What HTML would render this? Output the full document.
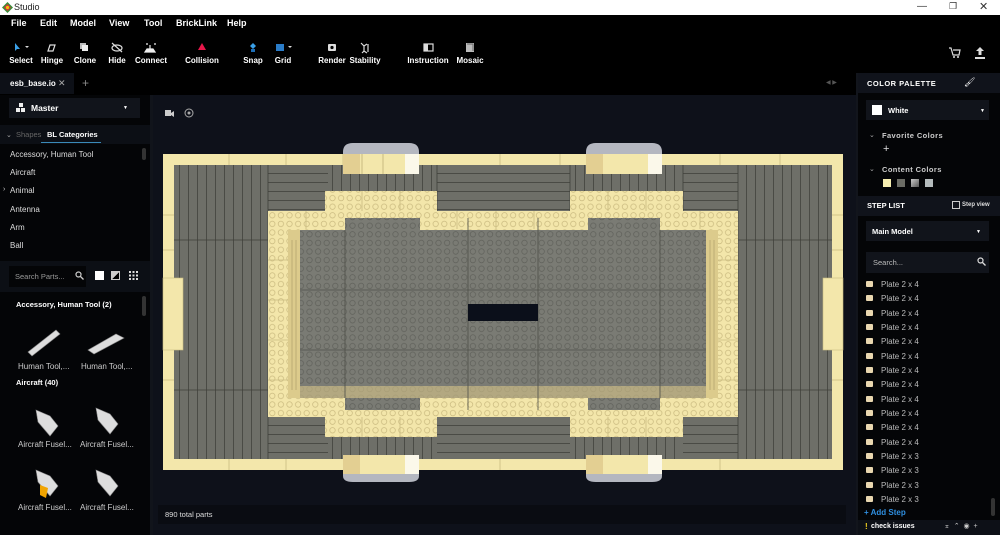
<!DOCTYPE html>
<html><head><meta charset="utf-8"><style>
*{margin:0;padding:0;box-sizing:border-box}
body{width:1000px;height:535px;overflow:hidden;background:#000;font-family:"Liberation Sans",sans-serif;color:#fff;position:relative;font-size:8px}
.a{position:absolute}
.b{font-weight:bold}
.menu span{position:absolute;top:18px;font-size:9px;font-weight:bold}
.tb span{position:absolute;top:56px;font-size:8px;font-weight:bold;transform:translateX(-50%);white-space:nowrap}
.li{position:absolute;left:10px;font-size:8px;color:#ddd}
.pl{position:absolute;left:867px;font-size:8px;color:#bbb}
.pl i{position:absolute;left:-1px;top:1px;width:7px;height:6px;background:#e9d7b0;border-radius:1px}
.pl b{position:absolute;left:14px;font-weight:normal;white-space:nowrap}
</style></head><body>
<div class="a" style="left:0;top:0;width:1000px;height:15px;background:#fff"></div>
<svg class="a" style="left:2px;top:2px" width="11" height="11" viewBox="0 0 11 11"><path d="M5.5 0L11 5.5 5.5 11 0 5.5z" fill="#3a8d3a"/><path d="M5.5 2L9 5.5 5.5 9 2 5.5z" fill="#d33"/><circle cx="5.5" cy="5.5" r="1.6" fill="#f4c20d"/></svg>
<div class="a" style="left:14px;top:2px;color:#222;font-size:9px">Studio</div>
<div class="a" style="left:917px;top:1px;color:#333;font-size:10px">—</div>
<div class="a" style="left:949px;top:1px;color:#333;font-size:9px">❐</div>
<div class="a" style="left:979px;top:0px;color:#333;font-size:11px">✕</div>
<div class="menu">
<span style="left:11px">File</span><span style="left:40px">Edit</span><span style="left:70px">Model</span><span style="left:109px">View</span><span style="left:144px">Tool</span><span style="left:176px">BrickLink</span><span style="left:227px">Help</span>
</div>
<div class="tb">
<span style="left:21px">Select</span><span style="left:52px">Hinge</span><span style="left:85px">Clone</span><span style="left:117px">Hide</span><span style="left:151px">Connect</span><span style="left:202px">Collision</span><span style="left:253px">Snap</span><span style="left:283px">Grid</span><span style="left:332px">Render</span><span style="left:365px">Stability</span><span style="left:428px">Instruction</span><span style="left:470px">Mosaic</span>
</div>
<svg class="a" style="left:0;top:40px" width="500" height="14" viewBox="0 40 500 14">
<path d="M15 43l0 8 2-2 3 0z" fill="#3aa0e8"/><path d="M25 46h4l-2 2z" fill="#ddd"/>
<path d="M48 51l2-6h5l-2 6z" fill="none" stroke="#ddd" stroke-width="1.2"/>
<rect x="80" y="43" width="6" height="6" fill="#bbb"/><rect x="82" y="45" width="6" height="6" fill="#eee"/>
<ellipse cx="117" cy="48" rx="5" ry="3" fill="none" stroke="#ddd" stroke-width="1.2"/><path d="M112 43l10 9" stroke="#ddd" stroke-width="1.2"/>
<path d="M146 44h2M154 44h2M150 45v4M145 52h10l-2-3h-6z" stroke="#eee" fill="#eee" stroke-width="1.2"/>
<path d="M202 43l4 7h-8z" fill="#e8174a"/>
<path d="M253 43l3 3-3 3-3-3z" fill="#3aa0e8"/><rect x="251" y="49" width="4" height="3" fill="#1e6fb8"/>
<rect x="276" y="44" width="8" height="7" fill="#2a7cc8"/><path d="M288 46h4l-2 2z" fill="#ddd"/>
<rect x="328" y="44" width="8" height="7" rx="1" fill="#ddd"/><circle cx="332" cy="47.5" r="1.6" fill="#000"/>
<path d="M361 43l3 3 3-2M364 46v5l-2 2M364 51l3 2M368 44v8" stroke="#ddd" stroke-width="1.2" fill="none"/>
<rect x="424" y="44" width="9" height="7" fill="none" stroke="#ddd" stroke-width="1.2"/><rect x="424" y="44" width="4" height="7" fill="#ddd"/>
<rect x="466" y="43" width="8" height="9" fill="#bbb"/><path d="M467 44h6v7" stroke="#666" fill="none"/>
</svg>
<svg class="a" style="left:945px;top:45px" width="50" height="16"><path d="M4 3h2l2 7h6l1-5H8" stroke="#ddd" fill="none" stroke-width="1.2"/><circle cx="9" cy="12" r="1" fill="#ddd"/><circle cx="13" cy="12" r="1" fill="#ddd"/><path d="M35 2l4 4h-2.5v4h-3V6H31z M30 12h10v2H30z" fill="#ddd"/></svg>
<div class="a" style="left:0;top:73px;width:74px;height:21px;background:#0d1017"></div>
<div class="a b" style="left:10px;top:79px;font-size:8px">esb_base.io</div>
<div class="a" style="left:58px;top:78px;font-size:9px;color:#aaa">✕</div>
<div class="a" style="left:82px;top:76px;font-size:12px;color:#888">+</div>
<div class="a" style="left:826px;top:79px;font-size:6px;color:#555">◀ ▶</div>
<div class="a" style="left:0;top:95px;width:150px;height:440px;background:#040507"></div>
<div class="a" style="left:9px;top:98px;width:131px;height:20px;background:#11141b"></div>
<svg class="a" style="left:16px;top:103px" width="10" height="10"><rect x="3" y="0" width="4" height="4" fill="#eee"/><rect x="0" y="5" width="4" height="4" fill="#eee"/><rect x="5" y="5" width="4" height="4" fill="#eee"/></svg>
<div class="a b" style="left:31px;top:103px;font-size:8.5px">Master</div>
<div class="a" style="left:123px;top:105px;font-size:5px">▼</div>
<div class="a" style="left:0;top:125px;width:150px;height:19px;background:#0c0f15"></div>
<div class="a" style="left:6px;top:131px;font-size:7px;color:#aaa">⌄</div>
<div class="a" style="left:16px;top:130px;font-size:7.5px;color:#666">Shapes</div>
<div class="a b" style="left:47px;top:130px;font-size:7.5px">BL Categories</div>
<div class="a" style="left:41px;top:142px;width:60px;height:1px;background:#3a8ab8"></div>
<div class="li" style="top:150px">Accessory, Human Tool</div>
<div class="li" style="top:168px">Aircraft</div>
<div class="li" style="top:186px">Animal</div><div class="a" style="left:3px;top:186px;font-size:7px;color:#ccc">›</div>
<div class="li" style="top:205px">Antenna</div>
<div class="li" style="top:223px">Arm</div>
<div class="li" style="top:241px">Ball</div>
<div class="a" style="left:142px;top:148px;width:4px;height:12px;background:#333;border-radius:2px"></div>
<div class="a" style="left:0;top:261px;width:150px;height:31px;background:#0c0f15"></div>
<div class="a" style="left:9px;top:266px;width:77px;height:21px;background:#040507"></div>
<div class="a" style="left:15px;top:272px;font-size:7.5px;color:#999">Search Parts...</div>
<svg class="a" style="left:75px;top:271px" width="9" height="9"><circle cx="3.5" cy="3.5" r="2.5" stroke="#ccc" fill="none" stroke-width="1.2"/><path d="M5.5 5.5l3 3" stroke="#ccc" stroke-width="1.3"/></svg>
<div class="a" style="left:95px;top:271px;width:9px;height:9px;background:#fff"></div>
<div class="a" style="left:111px;top:271px;width:9px;height:9px;border:1.2px solid #ccc;background:linear-gradient(135deg,#ccc 50%,#000 50%)"></div>
<svg class="a" style="left:129px;top:271px" width="9" height="9"><g fill="#ddd"><rect x="0" y="0" width="2" height="2"/><rect x="3.5" y="0" width="2" height="2"/><rect x="7" y="0" width="2" height="2"/><rect x="0" y="3.5" width="2" height="2"/><rect x="3.5" y="3.5" width="2" height="2"/><rect x="7" y="3.5" width="2" height="2"/><rect x="0" y="7" width="2" height="2"/><rect x="3.5" y="7" width="2" height="2"/><rect x="7" y="7" width="2" height="2"/></g></svg>
<div class="a b" style="left:16px;top:300px;font-size:7.5px">Accessory, Human Tool (2)</div>
<div class="a" style="left:142px;top:296px;width:4px;height:20px;background:#333;border-radius:2px"></div>
<svg class="a" style="left:0;top:320px" width="150" height="200">
<g fill="#ddd" stroke="#888" stroke-width=".6"><path d="M28 32l28-22 4 4-28 22z"/><path d="M88 30l28-16 8 4-30 16z"/>
<path d="M36 90l14 6 8 10-8 10-12-14z"/><path d="M96 88l14 6 8 10-8 10-12-14z"/>
<path d="M36 150l14 6 8 10-8 10-12-14z"/><path d="M96 150l14 6 8 10-8 10-12-14z"/></g>
<path d="M40 165l8 3-2 10-6-3z" fill="#f1a400"/>
</svg>
<div class="a" style="left:18px;top:362px;font-size:8px;color:#ccc">Human Tool,...</div>
<div class="a" style="left:81px;top:362px;font-size:8px;color:#ccc">Human Tool,...</div>
<div class="a b" style="left:16px;top:378px;font-size:7.5px">Aircraft (40)</div>
<div class="a" style="left:18px;top:440px;font-size:8px;color:#ccc">Aircraft Fusel...</div>
<div class="a" style="left:80px;top:440px;font-size:8px;color:#ccc">Aircraft Fusel...</div>
<div class="a" style="left:18px;top:503px;font-size:8px;color:#ccc">Aircraft Fusel...</div>
<div class="a" style="left:80px;top:503px;font-size:8px;color:#ccc">Aircraft Fusel...</div>
<div class="a" style="left:150px;top:95px;width:3px;height:440px;background:#11141b"></div>
<div class="a" style="left:153px;top:95px;width:703px;height:440px;background:#0e111a"></div>
<svg class="a" style="left:165px;top:108px" width="30" height="12"><rect x="0" y="2" width="6" height="6" fill="#ccc"/><path d="M6 5l3-2v6l-3-2z" fill="#ccc"/><circle cx="24" cy="5" r="4" stroke="#aaa" fill="none"/><circle cx="24" cy="5" r="1.5" fill="#aaa"/></svg>
<svg class="a" style="left:153px;top:95px" width="703" height="440" viewBox="153 95 703 440">
<defs>
<pattern id="gs" x="288" y="230" width="8.6" height="8.6" patternUnits="userSpaceOnUse"><rect width="8.6" height="8.6" fill="#7a7b74"/><circle cx="4.3" cy="4.3" r="2.7" fill="none" stroke="#5f605a" stroke-width=".7"/></pattern>
<pattern id="ts" x="268" y="211" width="8.6" height="8.6" patternUnits="userSpaceOnUse"><rect width="8.6" height="8.6" fill="#f3e6aa"/><circle cx="4.3" cy="4.3" r="2.7" fill="none" stroke="#c8b87e" stroke-width=".7"/></pattern>
<pattern id="vl" x="0" y="0" width="9" height="30" patternUnits="userSpaceOnUse"><rect width="9" height="30" fill="#6e6f68"/><rect x="8" width="1" height="30" fill="#4a4b45"/></pattern>
<pattern id="hl" x="0" y="165" width="30" height="9" patternUnits="userSpaceOnUse"><rect width="30" height="9" fill="#6e6f68"/><rect y="8" width="30" height="1" fill="#4a4b45"/></pattern>
</defs>
<path d="M343 160v-8q0-9 10-9h56q10 0 10 9v8z" fill="#b4b7c0"/>
<path d="M586 160v-8q0-9 10-9h56q10 0 10 9v8z" fill="#b4b7c0"/>
<path d="M343 472v4q0 6 10 6h56q10 0 10-6v-4z" fill="#b4b7c0"/>
<path d="M586 472v4q0 6 10 6h56q10 0 10-6v-4z" fill="#b4b7c0"/>
<rect x="163" y="154" width="680" height="316" fill="#f3e7ab"/>
<g stroke="#c9bb80" stroke-width=".8"><path d="M229 154v11M286 154v11M343 154v11M500 154v11M560 154v11M720 154v11M780 154v11M229 459v11M286 459v11M500 459v11M720 459v11M163 215h11M163 250h11M832 215h11M832 250h11M163 380h11M832 380h11"/></g>
<rect x="174" y="165" width="658" height="294" fill="url(#vl)"/>
<rect x="268" y="165" width="60" height="46" fill="url(#hl)"/>
<rect x="437" y="165" width="133" height="46" fill="url(#hl)"/>
<rect x="683" y="165" width="55" height="46" fill="url(#hl)"/>
<rect x="268" y="417" width="60" height="42" fill="url(#hl)"/>
<rect x="437" y="417" width="133" height="42" fill="url(#hl)"/>
<rect x="683" y="417" width="55" height="42" fill="url(#hl)"/>
<g stroke="#3f403a" stroke-width=".8"><path d="M174 240h94M738 240h94M174 390h94M738 390h94M268 165v46M437 165v46M570 165v46M683 165v46M738 165v294M268 165v294"/></g>
<rect x="343" y="154" width="76" height="20" fill="#f3e7ab"/><rect x="343" y="154" width="17" height="20" fill="#e3cf92"/><rect x="405" y="154" width="14" height="20" fill="#fbf8ea"/><path d="M362 154v20M383 154v20" stroke="#c9bb80"/>
<rect x="586" y="154" width="76" height="20" fill="#f3e7ab"/><rect x="586" y="154" width="17" height="20" fill="#e3cf92"/><rect x="648" y="154" width="14" height="20" fill="#fbf8ea"/>
<rect x="343" y="455" width="76" height="19" fill="#f3e7ab"/><rect x="343" y="455" width="17" height="19" fill="#e3cf92"/><rect x="405" y="455" width="14" height="19" fill="#fbf8ea"/>
<rect x="586" y="455" width="76" height="19" fill="#f3e7ab"/><rect x="586" y="455" width="17" height="19" fill="#e3cf92"/><rect x="648" y="455" width="14" height="19" fill="#fbf8ea"/>
<rect x="163" y="278" width="20" height="72" fill="#f3e7ab" stroke="#c9bb80" stroke-width=".6"/><rect x="823" y="278" width="20" height="72" fill="#f3e7ab" stroke="#c9bb80" stroke-width=".6"/>
<path d="M268 211h57v-20h112v20h133v-20h113v20h55v206h-55v20h-113v-20h-133v20h-112v-20h-57z" fill="url(#ts)"/>
<g stroke="#c9bb80" stroke-width=".8"><path d="M362 191v20M400 191v20M608 191v20M646 191v20M362 417v20M400 417v20M608 417v20M646 417v20M306 211v18M457 211v18M496 211v18M534 211v18M700 211v18M268 260h20M268 300h20M268 340h20M268 380h20M718 260h20M718 300h20M718 340h20M718 380h20"/></g>
<path d="M288 230h57v-12h75v12h168v-12h72v12h58v168h-58v12h-72v-12h-168v12h-75v-12h-57z" fill="url(#gs)"/>
<rect x="288" y="230" width="12" height="168" fill="#dccb8c"/><rect x="706" y="230" width="12" height="168" fill="#dccb8c"/>
<g stroke="#9a8c5c" stroke-width=".5"><path d="M292 240v150M296 240v150M710 240v150M714 240v150"/></g>
<rect x="300" y="386" width="406" height="12" fill="#d9c78a" opacity=".6"/>
<g stroke="#4e4f48" stroke-width=".8"><path d="M345 230v168M468 218v192M538 218v192M660 230v168M300 290h406M300 350h406"/></g>
<rect x="468" y="304" width="70" height="17" fill="#0b0f1a"/>
</svg>
<div class="a" style="left:158px;top:505px;width:688px;height:19px;background:#0a0c12"></div>
<div class="a" style="left:165px;top:510px;font-size:7.5px;color:#ddd">890 total parts</div>
<div class="a" style="left:856px;top:73px;width:144px;height:462px;background:#040507;border-left:2px solid #12151c"></div>
<div class="a" style="left:858px;top:73px;width:142px;height:20px;background:#10131b"></div>
<div class="a b" style="left:867px;top:79px;font-size:7.5px;letter-spacing:.5px">COLOR PALETTE</div>
<div class="a" style="left:964px;top:77px;font-size:9px">🖌</div>
<div class="a" style="left:866px;top:100px;width:123px;height:20px;background:#11141b"></div>
<div class="a" style="left:872px;top:105px;width:10px;height:10px;background:#fff"></div>
<div class="a b" style="left:888px;top:106px;font-size:7.5px">White</div>
<div class="a" style="left:980px;top:108px;font-size:5px">▼</div>
<div class="a" style="left:869px;top:131px;font-size:7px;color:#aaa">⌄</div>
<div class="a b" style="left:882px;top:131px;font-size:7.5px;color:#ccc;letter-spacing:.4px">Favorite Colors</div>
<div class="a" style="left:883px;top:143px;font-size:11px;color:#ddd">+</div>
<div class="a" style="left:869px;top:165px;font-size:7px;color:#aaa">⌄</div>
<div class="a b" style="left:882px;top:165px;font-size:7.5px;color:#ccc;letter-spacing:.4px">Content Colors</div>
<div class="a" style="left:883px;top:179px;width:8px;height:8px;background:#f6eeb0"></div>
<div class="a" style="left:897px;top:179px;width:8px;height:8px;background:#6b6c65"></div>
<div class="a" style="left:911px;top:179px;width:8px;height:8px;background:linear-gradient(135deg,#ccc,#555)"></div>
<div class="a" style="left:925px;top:179px;width:8px;height:8px;background:#b5bcbd"></div>
<div class="a" style="left:858px;top:196px;width:142px;height:20px;background:#10131b"></div>
<div class="a b" style="left:867px;top:201px;font-size:7.5px">STEP LIST</div>
<div class="a" style="left:952px;top:201px;width:8px;height:8px;border:1px solid #ccc"></div>
<div class="a b" style="left:962px;top:202px;font-size:6px;color:#ddd">Step view</div>
<div class="a" style="left:866px;top:221px;width:123px;height:20px;background:#11141b"></div>
<div class="a b" style="left:872px;top:227px;font-size:7.5px">Main Model</div>
<div class="a" style="left:976px;top:229px;font-size:5px">▼</div>
<div class="a" style="left:866px;top:252px;width:123px;height:21px;background:#11141b"></div>
<div class="a" style="left:873px;top:258px;font-size:7.5px;color:#bbb">Search...</div>
<svg class="a" style="left:977px;top:257px" width="9" height="9"><circle cx="3.5" cy="3.5" r="2.5" stroke="#ddd" fill="none" stroke-width="1.2"/><path d="M5.5 5.5l3 3" stroke="#ddd" stroke-width="1.3"/></svg>
<div class="pl" style="top:280px"><i></i><b>Plate 2 x 4</b></div>
<div class="pl" style="top:294px"><i></i><b>Plate 2 x 4</b></div>
<div class="pl" style="top:309px"><i></i><b>Plate 2 x 4</b></div>
<div class="pl" style="top:323px"><i></i><b>Plate 2 x 4</b></div>
<div class="pl" style="top:337px"><i></i><b>Plate 2 x 4</b></div>
<div class="pl" style="top:352px"><i></i><b>Plate 2 x 4</b></div>
<div class="pl" style="top:366px"><i></i><b>Plate 2 x 4</b></div>
<div class="pl" style="top:380px"><i></i><b>Plate 2 x 4</b></div>
<div class="pl" style="top:395px"><i></i><b>Plate 2 x 4</b></div>
<div class="pl" style="top:409px"><i></i><b>Plate 2 x 4</b></div>
<div class="pl" style="top:423px"><i></i><b>Plate 2 x 4</b></div>
<div class="pl" style="top:438px"><i></i><b>Plate 2 x 4</b></div>
<div class="pl" style="top:452px"><i></i><b>Plate 2 x 3</b></div>
<div class="pl" style="top:466px"><i></i><b>Plate 2 x 3</b></div>
<div class="pl" style="top:481px"><i></i><b>Plate 2 x 3</b></div>
<div class="pl" style="top:495px"><i></i><b>Plate 2 x 3</b></div>
<div class="a" style="left:991px;top:498px;width:4px;height:18px;background:#333;border-radius:2px"></div>
<div class="a b" style="left:864px;top:508px;font-size:8px;color:#2f8fe0">+ Add Step</div>
<div class="a" style="left:858px;top:520px;width:142px;height:15px;background:#0d1017"></div>
<div class="a b" style="left:865px;top:522px;font-size:8px;color:#f4d21e">!</div>
<div class="a b" style="left:871px;top:523px;font-size:7px">check issues</div>
<div class="a" style="left:944px;top:522px;font-size:7px;color:#ccc">⌅ &nbsp;⌃ &nbsp;◉ &nbsp;+</div>
</body></html>
